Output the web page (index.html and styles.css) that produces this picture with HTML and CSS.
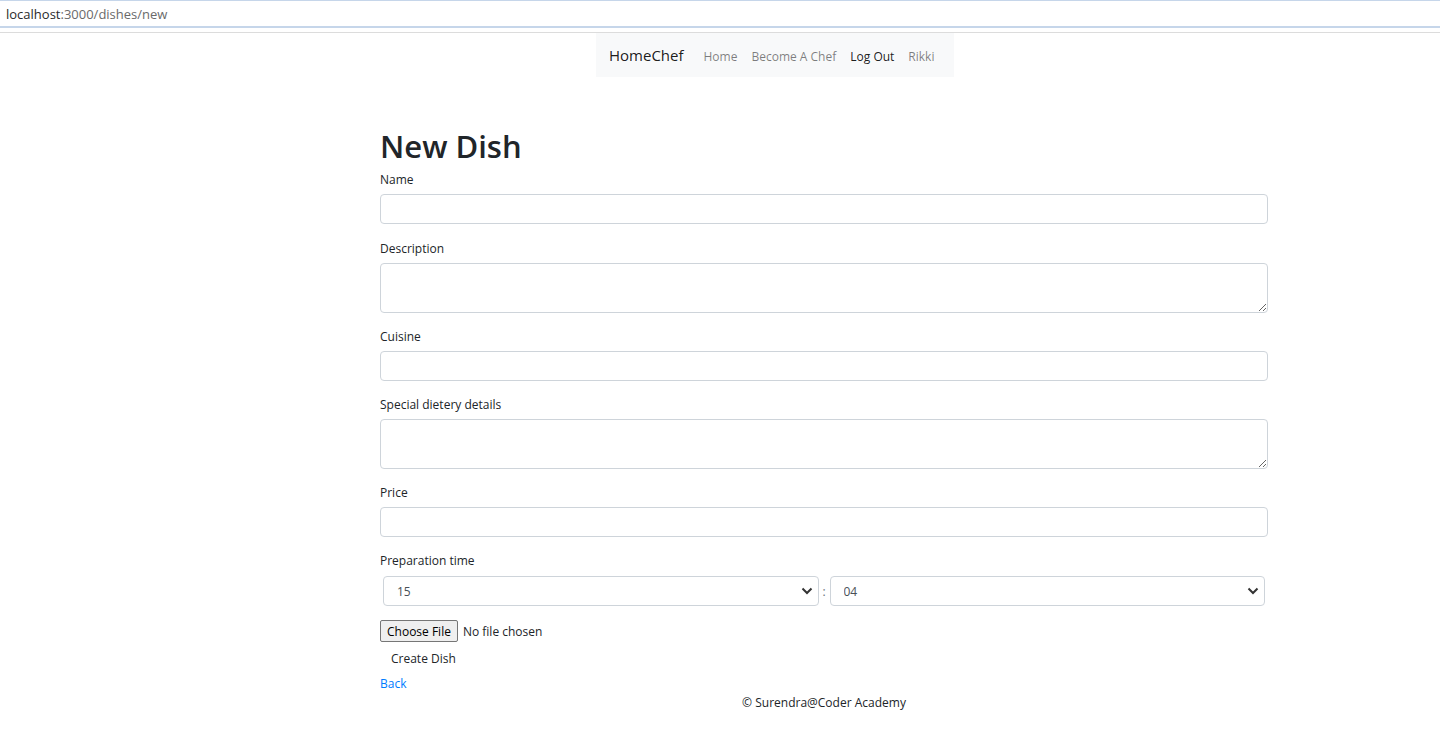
FILE: index.html
```html
<!DOCTYPE html>
<html lang="en">
<head>
<meta charset="utf-8">
<title>HomeChef - New Dish</title>
<link rel="stylesheet" href="styles.css">
</head>
<body>
<div class="addressbar">
  <span class="url-host">localhost</span><span class="url-path">:3000/dishes/new</span>
</div>
<div class="addressbar-sep"></div>

<nav class="navbar">
  <a class="brand" href="#">HomeChef</a>
  <a class="nav-link" href="#">Home</a>
  <a class="nav-link" href="#">Become A Chef</a>
  <a class="nav-link active" href="#">Log Out</a>
  <a class="nav-link" href="#">Rikki</a>
</nav>

<main class="container">
  <h1 class="title">New Dish</h1>
  <form class="dish-form">
    <div class="form-group first-group">
      <label class="field-label" for="name">Name</label>
      <input class="form-control" id="name" type="text">
    </div>
    <div class="form-group">
      <label class="field-label" for="description">Description</label>
      <textarea class="form-control area" id="description"></textarea>
    </div>
    <div class="form-group">
      <label class="field-label" for="cuisine">Cuisine</label>
      <input class="form-control" id="cuisine" type="text">
    </div>
    <div class="form-group">
      <label class="field-label" for="diet">Special dietery details</label>
      <textarea class="form-control area" id="diet"></textarea>
    </div>
    <div class="form-group">
      <label class="field-label" for="price">Price</label>
      <input class="form-control" id="price" type="text">
    </div>
    <div class="form-group">
      <label class="field-label" for="hours">Preparation time</label>
      <div class="time-row">
        <div class="select-wrap">
          <select class="form-select" id="hours"><option>15</option></select>
          <svg class="chevron" width="12" height="8" viewBox="0 0 12 8"><path d="M1.5 1.5 L6 6 L10.5 1.5" fill="none" stroke="#333" stroke-width="2"/></svg>
        </div>
        <span class="time-sep">:</span>
        <div class="select-wrap">
          <select class="form-select" id="minutes"><option>04</option></select>
          <svg class="chevron" width="12" height="8" viewBox="0 0 12 8"><path d="M1.5 1.5 L6 6 L10.5 1.5" fill="none" stroke="#333" stroke-width="2"/></svg>
        </div>
      </div>
    </div>
    <div class="file-row">
      <input class="file-input" type="file">
    </div>
    <button class="btn-plain" type="button">Create Dish</button>
  </form>
  <a class="back-link" href="#">Back</a>
  <footer class="footer">© Surendra@Coder Academy</footer>
</main>
</body>
</html>
```
FILE: styles.css
```css
* { box-sizing: border-box; }
html, body { margin: 0; padding: 0; background: #fff; }
body {
  font-family: "Open Sans", "Noto Sans", sans-serif;
  color: #212529;
  font-size: 12px;
}

.addressbar {
  height: 28px;
  border-top: 1px solid #c6d6ea;
  border-bottom: 2px solid #c6d6ea;
  padding: 0 6px;
  display: flex;
  align-items: center;
  font-size: 13px;
  background: #fff;
}
.url-host { color: #2a2a2a; }
.url-path { color: #6a6a6a; }
.addressbar-sep {
  height: 5px;
  border-bottom: 1px solid #dcdcdc;
}

.navbar {
  margin-left: 596px;
  display: inline-flex;
  align-items: center;
  height: 44px;
  padding: 0 13px 0 13px;
  background: #f8f9fa;
}
.brand {
  font-size: 15px;
  color: rgba(0,0,0,.9);
  text-decoration: none;
  margin-right: 13px;
  margin-top: -1px;
}
.nav-link {
  font-size: 12px;
  color: rgba(0,0,0,.5);
  text-decoration: none;
  padding: 0 7px;
  margin-top: 2px;
}
.nav-link.active { color: rgba(0,0,0,.9); }

.container {
  margin-left: 380px;
  width: 888px;
  padding-top: 50px;
}
.title {
  font-size: 31px;
  font-weight: 600;
  line-height: 38px;
  margin: 0 0 5px;
  color: #212529;
}
.form-group { margin-bottom: 14px; }
.form-group.first-group { margin-bottom: 15px; }
.field-label {
  display: block;
  line-height: 18px;
  padding-top: 1px;
  margin-bottom: 5px;
  font-size: 12px;
}
.form-control {
  display: block;
  width: 100%;
  height: 30px;
  border: 1px solid #ced4da;
  border-radius: 4px;
  font-family: inherit;
  font-size: 12px;
  color: #495057;
  padding: 4px 10px;
  background: #fff;
}
.form-control.area { height: 50px; resize: vertical; }

.time-row {
  display: flex;
  align-items: center;
  padding: 1px 3px 0 3px;
}
.select-wrap {
  position: relative;
  flex: 1;
}
.form-select {
  appearance: none;
  -webkit-appearance: none;
  width: 100%;
  height: 30px;
  border: 1px solid #ced4da;
  border-radius: 4px;
  background: #fff;
  font-family: inherit;
  font-size: 12px;
  color: #495057;
  padding: 0 13px;
  display: block;
}
.chevron {
  position: absolute;
  right: 6px;
  top: 11px;
  pointer-events: none;
}
.time-sep {
  width: 11px;
  text-align: center;
  color: #6c757d;
  font-size: 12px;
}

.file-row { margin-top: 0; height: 22px; }
.file-input {
  font-family: inherit;
  font-size: 12px;
  color: #212529;
}
.file-input::file-selector-button {
  font-family: inherit;
  font-size: 12px;
  height: 22px;
  padding: 0 6px;
  margin-right: 5px;
  border: 1px solid #767676;
  border-radius: 2px;
  background: #efefef;
  color: #000;
}

.btn-plain {
  display: block;
  margin-top: 4px;
  background: transparent;
  border: 1px solid transparent;
  font-family: inherit;
  font-size: 12px;
  color: #212529;
  padding: 3px 10px;
  line-height: 18px;
}
.back-link {
  display: block;
  color: #007bff;
  text-decoration: none;
  line-height: 18px;
  margin-top: 3px;
}
.footer {
  text-align: center;
  line-height: 18px;
  margin-top: 1px;
}
```
